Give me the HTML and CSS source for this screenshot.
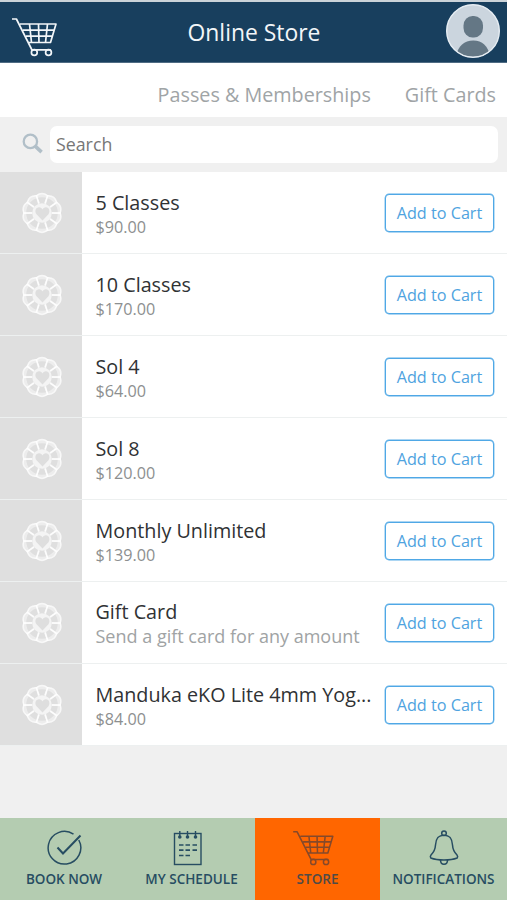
FILE: index.html
```
<!DOCTYPE html>
<html lang="en">
<head>
<meta charset="utf-8">
<title>Online Store</title>
<link rel="stylesheet" href="styles.css">
</head>
<body>
<svg class="defs" aria-hidden="true">
  <symbol id="cart" viewBox="0 0 46 40">
    <g fill="none" stroke="currentColor" stroke-width="1.700" stroke-linejoin="round">
      <path d="M1 2H5.400L21 33M9 7H45L39.500 25.500H17.300M12 13.200H43M15 19.200H41.300M18.500 7L20.500 25.500M27.500 7L28 25.500M36.500 7L34.500 25.500M20.500 32.800H40"/>
      <circle cx="23.300" cy="35.500" r="2.900"/>
      <circle cx="37.500" cy="35.500" r="2.900"/>
    </g>
  </symbol>
  <symbol id="medallion" viewBox="-21 -21 42 42">
    <g fill="none" stroke="#fff" stroke-width="1.500">
      <g id="p"><path d="M-2.800 -9.500L-5.600 -17.200Q0 -21.800 5.600 -17.200L2.800 -9.500" stroke-opacity=".75"/></g>
      <use href="#p" transform="rotate(36)"/><use href="#p" transform="rotate(72)"/><use href="#p" transform="rotate(108)"/>
      <use href="#p" transform="rotate(144)"/><use href="#p" transform="rotate(180)"/><use href="#p" transform="rotate(216)"/>
      <use href="#p" transform="rotate(252)"/><use href="#p" transform="rotate(288)"/><use href="#p" transform="rotate(324)"/>
      <circle r="17.400" stroke-width="3.200" stroke-opacity=".45"/>
    </g>
    <circle r="9.800" fill="#fff" fill-opacity=".65"/>
    <path d="M0.500 7.500L-5.500 1.200C-8 -2 -6 -5.800 -3 -5.800C-1.200 -5.800 0 -4.800 .5 -3.500C1 -4.800 2.200 -5.800 4 -5.800C7 -5.800 8.500 -2 6.500 1.200Z" fill="#dedede"/>
  </symbol>
</svg>
<div class="app">
  <header class="header">
    <svg class="header-cart"><use href="#cart"/></svg>
    <h1>Online Store</h1>
    <svg class="avatar" viewBox="0 0 54 54">
      <clipPath id="face"><circle cx="27" cy="27" r="26"/></clipPath>
      <circle cx="27" cy="27" r="26.400" fill="#cbd5de"/>
      <g fill="#647785" clip-path="url(#face)">
        <rect x="17.500" y="12" width="19.500" height="21.500" rx="9" ry="9.500"/>
        <path d="M9 54C12 42 18 36.500 27.300 36.500S42 42 45 54Z"/>
      </g>
      <circle cx="27" cy="27" r="26.300" fill="none" stroke="#e6edf3" stroke-width="1.400"/>
    </svg>
  </header>
  <nav class="tabs"><a>Passes &amp; Memberships</a><a>Gift Cards</a></nav>
  <div class="search">
    <svg class="lens" viewBox="0 0 22 22" fill="none" stroke="#b1bfc8"><circle cx="8.800" cy="8.800" r="7" stroke-width="2.400"/><path d="M13.800 13.800L20.500 20" stroke-width="3.800"/></svg>
    <div class="field">Search</div>
  </div>
  <main class="list">
    <div class="row"><div class="thumb"><svg><use href="#medallion"/></svg></div><div class="info"><div class="name">5 Classes</div><div class="price">$90.00</div></div><button>Add to Cart</button></div>
    <div class="row"><div class="thumb"><svg><use href="#medallion"/></svg></div><div class="info"><div class="name">10 Classes</div><div class="price">$170.00</div></div><button>Add to Cart</button></div>
    <div class="row"><div class="thumb"><svg><use href="#medallion"/></svg></div><div class="info"><div class="name">Sol 4</div><div class="price">$64.00</div></div><button>Add to Cart</button></div>
    <div class="row"><div class="thumb"><svg><use href="#medallion"/></svg></div><div class="info"><div class="name">Sol 8</div><div class="price">$120.00</div></div><button>Add to Cart</button></div>
    <div class="row"><div class="thumb"><svg><use href="#medallion"/></svg></div><div class="info"><div class="name">Monthly Unlimited</div><div class="price">$139.00</div></div><button>Add to Cart</button></div>
    <div class="row gift"><div class="thumb"><svg><use href="#medallion"/></svg></div><div class="info"><div class="name">Gift Card</div><div class="note">Send a gift card for any amount</div></div><button>Add to Cart</button></div>
    <div class="row"><div class="thumb"><svg><use href="#medallion"/></svg></div><div class="info"><div class="name">Manduka eKO Lite 4mm Yog...</div><div class="price">$84.00</div></div><button>Add to Cart</button></div>
  </main>
  <nav class="bottom">
    <a><svg viewBox="0 0 40 36" fill="none" stroke="currentColor" stroke-width="1.500"><path d="M29.500 4.200A16.300 16.300 0 1 0 34.800 10"/><path d="M13.500 17.500L19 23.500L36.500 5.500" stroke-width="2"/></svg><span>BOOK NOW</span></a>
    <a><svg class="calendar" viewBox="0 0 40 36" fill="none" stroke="currentColor" stroke-width="1.400"><rect x="3.500" y="3.500" width="26.500" height="31"/><path d="M8.800 1V7M16.500 1V7M24.500 1V7"/><g fill="currentColor" stroke="none"><circle cx="8.800" cy="7" r="1.800"/><circle cx="16.500" cy="7" r="1.800"/><circle cx="24.500" cy="7" r="1.800"/></g><path d="M8 15h4.500M14.500 15H19M21.500 15H26M8 20.200h4.500M14.500 20.200H19M21.500 20.200H26M8 25.500h4.500M14.500 25.500H19" stroke-width="1.700"/></svg><span>MY SCHEDULE</span></a>
    <a class="active"><svg class="store-cart"><use href="#cart"/></svg><span>STORE</span></a>
    <a><svg viewBox="0 0 40 36" fill="none" stroke="currentColor" stroke-width="1.500"><circle cx="20" cy="3.200" r="2.300"/><path d="M20 5.300C13 5.300 11.800 10 11.500 15C11.200 20.500 9.500 22.500 7 25Q5.800 26.500 6.800 28Q12 30 20 30T33.200 28Q34.200 26.500 33 25C30.500 22.500 28.800 20.500 28.500 15C28.200 10 27 5.300 20 5.300Z"/><path d="M16.500 30C16.500 35.800 23.500 35.800 23.500 30"/></svg><span>NOTIFICATIONS</span></a>
  </nav>
</div>
</body>
</html>
```
FILE: styles.css
```
* { box-sizing: border-box; }
body { margin: 0; font-family: "Open Sans", sans-serif; background: #f0f0f0; }
.defs { position: absolute; width: 0; height: 0; }
.app { width: 507px; height: 900px; display: flex; flex-direction: column; overflow: hidden; }
.header { height: 63px; flex: none; border-top: 2px solid #cbd3d9; background: #183f5e; color: #f2f6f9; display: grid; grid-template-columns: 61px 1fr 61px; align-items: start; border-bottom: 1px solid #4f6c84; }
.header-cart { width: 46px; height: 40px; margin: 15px 0 0 11px; }
.header h1 { margin: 14px 0 0 1px; font-size: 22.9px; line-height: 34px; font-weight: 400; text-align: center; }
.avatar { width: 54px; height: 54px; margin-top: 2px; }
.tabs { height: 54px; flex: none; background: #fff; display: flex; justify-content: flex-end; gap: 34px; padding: 18px 11px 0 0; font-size: 19.75px; line-height: 28px; color: #a0a4a6; }
.search { height: 55px; flex: none; background: #f0f0f0; display: flex; align-items: flex-start; padding: 9px 9px 0 22px; }
.lens { width: 21px; height: 21px; margin: 7px 7px 0 0; }
.field { flex: 1; height: 37px; border-radius: 7px; background: #fff; padding-left: 6px; font-size: 17.8px; line-height: 37px; color: #777; }
.list { flex: none; }
.row { height: 82px; display: flex; align-items: center; background: #fff; border-bottom: 1px solid #edf0f0; padding-right: 13px; }
.thumb { width: 82px; height: 81px; background: #dfdfdf; display: grid; place-items: center; }
.thumb svg { width: 42px; height: 42px; margin: 1px 0 0 1px; }
.info { flex: 1; padding: 2px 0 0 13.5px; white-space: nowrap; }
.name { font-size: 19.75px; line-height: 26px; color: #303234; }
.price { font-size: 16.2px; line-height: 22px; color: #8d8f90; }
.note { font-size: 18px; line-height: 22px; color: #a0a3a4; }
.gift .info { padding-top: 0; }
button { width: 109px; height: 38px; flex: none; padding: 0; border: 1.5px solid #4fa8e6; box-shadow: 0 0 0 .4px #5baee7; border-radius: 4px; background: #fff; font: 16.2px/35px "Open Sans", sans-serif; color: #4fa3e0; margin-top: 1px; }
.bottom { margin-top: auto; height: 82px; flex: none; display: grid; grid-template-columns: 128px 127px 125px 127px; background: #b4ccb1; color: #274d62; }
.bottom a { display: flex; flex-direction: column; align-items: center; padding-top: 12px; font-size: 13.5px; line-height: 18px; font-weight: 600; }
.bottom svg { width: 40px; height: 36px; margin-bottom: 4px; }
.bottom .calendar { margin-left: -1px; }
.bottom .store-cart { margin-left: -10px; width: 42px; }
.bottom .active { background: #ff6600; color: #4f4b47; }
.bottom .active svg { color: #85492a; }
```
